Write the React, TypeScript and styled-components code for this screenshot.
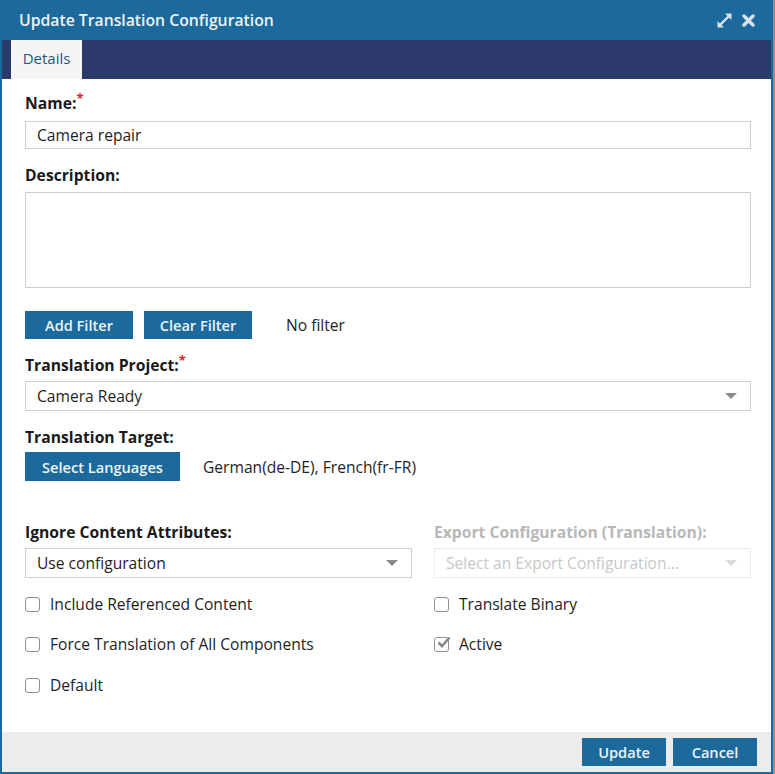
import React from "react";
import styled, { createGlobalStyle } from "styled-components";

const Global = createGlobalStyle`
  html, body { margin: 0; padding: 0; background: #8f8f8f; }
  body { font-family: "Open Sans", "Liberation Sans", sans-serif; }
  * { box-sizing: border-box; }
`;

const Dialog = styled.div`
  width: 773px;
  height: 774px;
  background: #fff;
  border: 2px solid #1b6a9b;
  border-top: none;
  display: flex;
  flex-direction: column;
`;

const Header = styled.div`
  height: 40px;
  margin: 0 -2px;
  background: #1b6a9b;
  display: flex;
  align-items: center;
  justify-content: space-between;
  padding: 0 18px 0 19px;
  color: #eef2f5;
  font-size: 15.75px;
  font-weight: 600;
`;

const HeaderIcons = styled.div`
  display: flex;
  align-items: center;
  gap: 9px;
`;

const TabBar = styled.div`
  height: 39px;
  background: #2b3a6b;
  padding-left: 9px;
  display: flex;
`;

const Tab = styled.div`
  width: 71px;
  background: #f5f5f5;
  color: #1f5582;
  font-size: 15px;
  font-weight: 500;
  display: flex;
  align-items: center;
  justify-content: center;
  padding-bottom: 3px;
`;

const Body = styled.div`
  flex: 1;
  padding: 14px 20px 0 23px;
  display: flex;
  flex-direction: column;
`;

const Label = styled.div<{ $mt?: number; $mb?: number; $disabled?: boolean }>`
  font-size: 15.7px;
  font-weight: 700;
  line-height: 21px;
  color: ${(p) => (p.$disabled ? "#b8b8b8" : "#1a1a1a")};
  margin-top: ${(p) => p.$mt ?? 0}px;
  margin-bottom: ${(p) => p.$mb ?? 6}px;
`;

const Req = styled.sup`
  color: #e0201a;
  font-size: 13px;
  line-height: 0;
  position: relative;
  top: 0px;
`;

const Input = styled.div`
  height: 28px;
  border: 1px solid #cfcfcf;
  padding: 0 11px;
  font-size: 15.6px;
  color: #1e1e1e;
  display: flex;
  align-items: center;
`;

const TextArea = styled.div`
  height: 96px;
  border: 1px solid #cfcfcf;
`;

const Row = styled.div<{ $mt: number }>`
  display: flex;
  align-items: center;
  margin-top: ${(p) => p.$mt}px;
`;

const Button = styled.button<{ $w: number; $h?: number; $ml?: number }>`
  width: ${(p) => p.$w}px;
  height: ${(p) => p.$h ?? 28}px;
  margin-left: ${(p) => p.$ml ?? 0}px;
  background: #1b6a9b;
  border: none;
  color: #eef3f7;
  font-family: "Open Sans", "Liberation Sans", sans-serif;
  font-size: 14.6px;
  font-weight: 600;
  padding: 0;
  cursor: pointer;
`;

const Note = styled.span<{ $ml: number }>`
  margin-left: ${(p) => p.$ml}px;
  font-size: 15.6px;
  color: #1e1e1e;
`;

const Select = styled.div<{ $disabled?: boolean }>`
  height: 30px;
  border: 1px solid ${(p) => (p.$disabled ? "#ececec" : "#cfcfcf")};
  padding: 0 13px 0 11px;
  font-size: 15.6px;
  color: ${(p) => (p.$disabled ? "#c8c8c8" : "#1e1e1e")};
  display: flex;
  align-items: center;
  justify-content: space-between;
`;

const Caret = styled.span<{ $disabled?: boolean }>`
  width: 0;
  height: 0;
  border-left: 6px solid transparent;
  border-right: 6px solid transparent;
  border-top: 6px solid ${(p) => (p.$disabled ? "#dcdcdc" : "#8a8a8a")};
`;

const Columns = styled.div`
  display: grid;
  grid-template-columns: 387px 1fr;
  column-gap: 22px;
  margin-top: 41px;
`;

const Column = styled.div`
  display: flex;
  flex-direction: column;
`;

const Check = styled.label<{ $mt: number }>`
  display: flex;
  align-items: center;
  gap: 10px;
  height: 20px;
  margin-top: ${(p) => p.$mt}px;
  font-size: 15.6px;
  color: #1e1e1e;
`;

const Box = styled.span`
  width: 15px;
  height: 15px;
  border: 1.5px solid #8e8e8e;
  border-radius: 3px;
  background: #fff;
  position: relative;
  flex: none;
`;

const Tick = styled.svg`
  position: absolute;
  left: 1px;
  top: -3px;
`;

const Footer = styled.div`
  height: 40px;
  background: #ececec;
  display: flex;
  align-items: center;
  justify-content: flex-end;
  gap: 7px;
  padding-right: 14px;
`;

const CheckItem = ({ label, mt, checked }: { label: string; mt: number; checked?: boolean }) => (
  <Check $mt={mt}>
    <Box>
      {checked && (
        <Tick width="15" height="15" viewBox="0 0 15 15">
          <path d="M2.5 7.5 L6 11 L13.5 2.5" fill="none" stroke="#8a8a8a" strokeWidth="2.6" />
        </Tick>
      )}
    </Box>
    {label}
  </Check>
);

export default function App() {
  return (
    <>
      <Global />
      <Dialog>
        <Header>
          <span>Update Translation Configuration</span>
          <HeaderIcons>
            <svg width="17" height="17" viewBox="0 0 17 17">
              <path d="M3.5 13.5 L13.5 3.5" stroke="#d6e3ee" strokeWidth="2.4" />
              <path d="M9 1.5 H15.5 V8 Z" fill="#d6e3ee" />
              <path d="M1.5 9 V15.5 H8 Z" fill="#d6e3ee" />
            </svg>
            <svg width="13" height="13" viewBox="0 0 13 13">
              <path d="M2 2 L11 11 M11 2 L2 11" stroke="#d6e3ee" strokeWidth="3.4" strokeLinecap="round" />
            </svg>
          </HeaderIcons>
        </Header>
        <TabBar>
          <Tab>Details</Tab>
        </TabBar>
        <Body>
          <Label $mb={7}>
            Name:<Req>*</Req>
          </Label>
          <Input>Camera repair</Input>
          <Label $mt={16} $mb={6}>Description:</Label>
          <TextArea />
          <Row $mt={23}>
            <Button $w={108}>Add Filter</Button>
            <Button $w={108} $ml={11}>Clear Filter</Button>
            <Note $ml={34}>No filter</Note>
          </Row>
          <Label $mt={16} $mb={5}>
            Translation Project:<Req>*</Req>
          </Label>
          <Select>
            <span>Camera Ready</span>
            <Caret />
          </Select>
          <Label $mt={16} $mb={4}>Translation Target:</Label>
          <Row $mt={0}>
            <Button $w={155} $h={29}>Select Languages</Button>
            <Note $ml={23}>German(de-DE), French(fr-FR)</Note>
          </Row>
          <Columns>
            <Column>
              <Label $mb={5}>Ignore Content Attributes:</Label>
              <Select>
                <span>Use configuration</span>
                <Caret />
              </Select>
              <CheckItem label="Include Referenced Content" mt={16} />
              <CheckItem label="Force Translation of All Components" mt={20} />
              <CheckItem label="Default" mt={21} />
            </Column>
            <Column>
              <Label $mb={5} $disabled>Export Configuration (Translation):</Label>
              <Select $disabled>
                <span>Select an Export Configuration...</span>
                <Caret $disabled />
              </Select>
              <CheckItem label="Translate Binary" mt={16} />
              <CheckItem label="Active" mt={20} checked />
            </Column>
          </Columns>
        </Body>
        <Footer>
          <Button $w={84}>Update</Button>
          <Button $w={84}>Cancel</Button>
        </Footer>
      </Dialog>
    </>
  );
}
